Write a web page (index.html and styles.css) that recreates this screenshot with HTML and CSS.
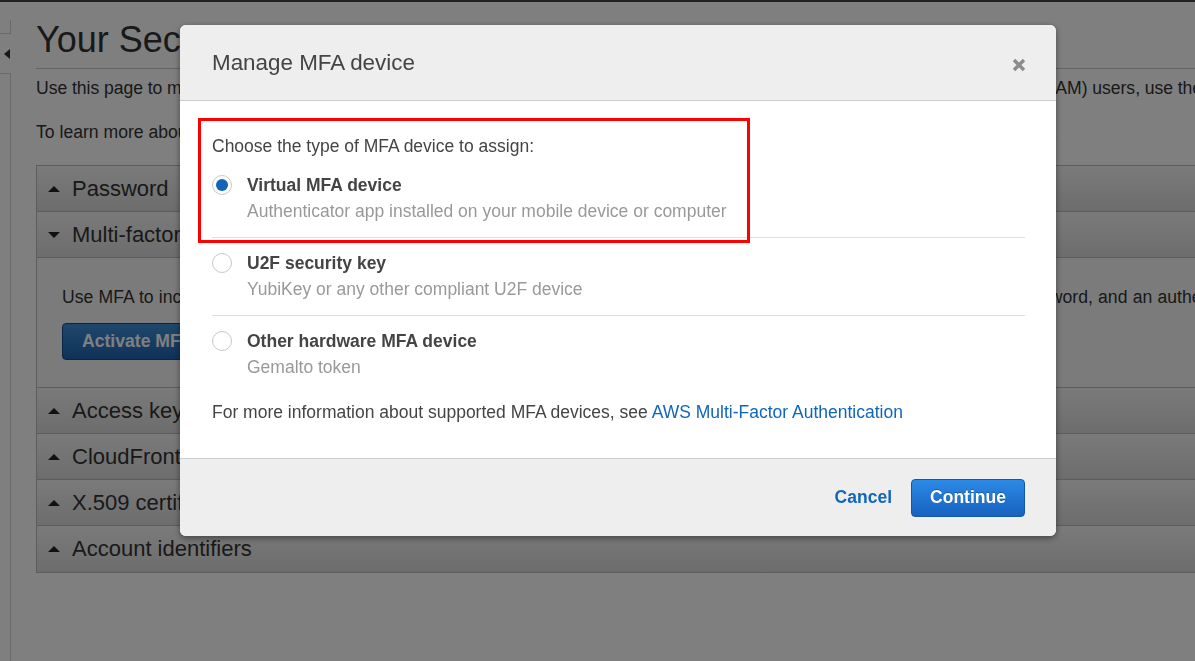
FILE: index.html
```html
<!DOCTYPE html>
<html lang="en">
<head>
<meta charset="utf-8">
<title>Your Security Credentials</title>
<link rel="stylesheet" href="styles.css">
</head>
<body>
<div class="topbar"></div>
<div class="page">
  <aside class="sidebar">
    <div class="side-top"></div>
    <div class="side-tab"><span class="tab-arrow"></span></div>
    <div class="side-rest"></div>
  </aside>
  <main class="main">
    <h1 class="title">Your Security Credentials</h1>
    <p class="intro first">Use this page to manage the credentials for your AWS account. To manage credentials for AWS Identity and Access Management (IAM) users, use the IAM Console.</p>
    <p class="intro second">To learn more about the types of AWS credentials and how they're used, see AWS Security Credentials in AWS General Reference.</p>
    <div class="panel">
      <div class="row"><span class="tri up"></span>Password</div>
      <div class="row"><span class="tri down"></span>Multi-factor authentication (MFA)</div>
      <div class="row-body">
        <p>Use MFA to increase the security of your AWS environment. Signing in to MFA-protected accounts requires a user name, password, and an authentication code from an MFA device.</p>
        <button class="btn-dark">Activate MFA</button>
      </div>
      <div class="row"><span class="tri up"></span>Access keys (access key ID and secret access key)</div>
      <div class="row"><span class="tri up"></span>CloudFront key pairs</div>
      <div class="row"><span class="tri up"></span>X.509 certificate</div>
      <div class="row last"><span class="tri up"></span>Account identifiers</div>
    </div>
  </main>
</div>

<div class="overlay"></div>

<div class="modal">
  <div class="modal-header">
    <h2 class="modal-title">Manage MFA device</h2>
    <span class="close" aria-label="Close">
      <svg width="14" height="14" viewBox="0 0 14 14"><path d="M2 2 L12 12 M12 2 L2 12" stroke="#8c8c8c" stroke-width="3.4" stroke-linecap="butt"/></svg>
    </span>
  </div>
  <div class="modal-body">
    <p class="lead">Choose the type of MFA device to assign:</p>
    <div class="option">
      <span class="radio checked"><span class="dot"></span></span>
      <div class="opt-text">
        <div class="opt-label">Virtual MFA device</div>
        <div class="opt-desc">Authenticator app installed on your mobile device or computer</div>
      </div>
    </div>
    <div class="option">
      <span class="radio"></span>
      <div class="opt-text">
        <div class="opt-label">U2F security key</div>
        <div class="opt-desc">YubiKey or any other compliant U2F device</div>
      </div>
    </div>
    <div class="option last">
      <span class="radio"></span>
      <div class="opt-text">
        <div class="opt-label">Other hardware MFA device</div>
        <div class="opt-desc">Gemalto token</div>
      </div>
    </div>
    <p class="note">For more information about supported MFA devices, see <a class="link" href="#">AWS Multi-Factor Authentication</a></p>
  </div>
  <div class="modal-footer">
    <a class="cancel" href="#">Cancel</a>
    <button class="btn-primary">Continue</button>
  </div>
  <div class="highlight"></div>
</div>
</body>
</html>
```

FILE: styles.css
```css
* { box-sizing: border-box; }

html, body {
  margin: 0;
  padding: 0;
  height: 100%;
}

body {
  font-family: "Liberation Sans", Arial, sans-serif;
  color: #333;
  background: #fff;
  overflow: hidden;
  position: relative;
}

.topbar {
  height: 2px;
  background: #444;
}

.page {
  display: flex;
  height: calc(100% - 2px);
}

.sidebar {
  width: 11px;
  flex: none;
  display: flex;
  flex-direction: column;
  padding-top: 18px;
}

.side-top {
  height: 14px;
  border-right: 1px solid #d4d4d4;
  border-bottom: 1px solid #d4d4d4;
}

.side-tab {
  height: 39px;
  display: flex;
  align-items: center;
  padding-left: 4px;
}

.tab-arrow {
  width: 0;
  height: 0;
  border-top: 5px solid transparent;
  border-bottom: 5px solid transparent;
  border-right: 6px solid #333;
}

.side-rest {
  flex: 1;
  border-top: 1px solid #d4d4d4;
  border-right: 1px solid #d4d4d4;
}

.main {
  margin-left: 25px;
  width: 1600px;
  flex: none;
}

.title {
  margin: 0;
  padding-top: 16px;
  padding-bottom: 6px;
  font-size: 36px;
  line-height: 44px;
  font-weight: normal;
  color: #333;
  border-bottom: 1px solid #c8c8c8;
}

.intro {
  margin: 0;
  font-size: 17.6px;
  line-height: 24px;
  color: #333;
  white-space: nowrap;
}

.intro.first { margin-top: 7px; word-spacing: -0.25px; }
.intro.second { margin-top: 20px; }

.panel {
  margin-top: 21px;
  border: 1px solid #bbb;
  border-right: none;
}

.row {
  height: 46px;
  display: flex;
  align-items: center;
  padding-left: 11px;
  font-size: 22px;
  color: #333;
  background: linear-gradient(#f5f5f5, #dadada);
  border-bottom: 1px solid #b9b9b9;
}

.row.last { border-bottom: none; }

.tri {
  width: 0;
  height: 0;
  margin-right: 12px;
  border-left: 6px solid transparent;
  border-right: 6px solid transparent;
}

.tri.up { border-bottom: 6px solid #222; }
.tri.down { border-top: 6px solid #222; }

.row-body {
  padding: 27px 0 27px 25px;
  background: #f7f7f7;
  border-bottom: 1px solid #b9b9b9;
}

.row-body p {
  margin: 0;
  font-size: 17.6px;
  line-height: 24px;
  white-space: nowrap;
  word-spacing: 0.35px;
}

.btn-dark {
  margin-top: 14px;
  height: 37px;
  padding: 0 19px;
  font-family: inherit;
  font-size: 17.6px;
  font-weight: bold;
  color: #fff;
  border: 1px solid #0e4a8a;
  border-radius: 4px;
  background: linear-gradient(#3f8fd8, #1f63b0);
}

.overlay {
  position: fixed;
  inset: 0;
  background: rgba(0, 0, 0, 0.5);
}

.modal {
  position: fixed;
  left: 180px;
  top: 25px;
  width: 876px;
  background: #fff;
  border-radius: 6px;
  overflow: hidden;
  box-shadow: 0 2px 6px rgba(0, 0, 0, 0.45);
  color: #444;
}

.modal-header {
  height: 76px;
  padding: 0 30px 0 32px;
  display: flex;
  align-items: center;
  justify-content: space-between;
  background: #eee;
  border-bottom: 1px solid #ccc;
}

.modal-title {
  margin: 0;
  font-size: 22.4px;
  font-weight: normal;
  color: #444;
}

.close {
  display: flex;
  margin-top: 5px;
}

.modal-body {
  padding: 32px 31px 33px 32px;
}

.lead {
  margin: 0 0 1px;
  font-size: 17.5px;
  line-height: 26px;
  color: #444;
}

.option {
  display: flex;
  align-items: flex-start;
  padding: 12px 0 13px;
  border-bottom: 1px solid #ddd;
}

.option.last { border-bottom: none; }

.radio {
  width: 20px;
  height: 20px;
  flex: none;
  margin-top: 3px;
  margin-right: 15px;
  border: 1px solid #c8c8c8;
  border-radius: 50%;
  background: #fff;
  display: flex;
  align-items: center;
  justify-content: center;
}

.dot {
  width: 12px;
  height: 12px;
  border-radius: 50%;
  background: #1166bb;
}

.opt-label {
  font-size: 17.5px;
  line-height: 26px;
  font-weight: bold;
  color: #444;
}

.opt-desc {
  font-size: 17.5px;
  line-height: 26px;
  color: #999;
}

.note {
  margin: 6px 0 0;
  font-size: 17.5px;
  line-height: 26px;
  color: #444;
}

.link {
  color: #1166bb;
  text-decoration: none;
}

.modal-footer {
  height: 78px;
  padding-right: 31px;
  display: flex;
  align-items: center;
  justify-content: flex-end;
  gap: 19px;
  background: #eee;
  border-top: 1px solid #ccc;
}

.cancel {
  font-size: 17.5px;
  font-weight: bold;
  color: #1166bb;
  text-decoration: none;
}

.btn-primary {
  width: 114px;
  height: 38px;
  font-family: inherit;
  font-size: 17.5px;
  font-weight: bold;
  color: #fff;
  border: 1px solid #1458a3;
  border-radius: 4px;
  background: linear-gradient(#2c8ae6, #1762bf);
  text-shadow: 0 -1px 0 rgba(0, 0, 0, 0.25);
}

.highlight {
  position: absolute;
  left: 18px;
  top: 93px;
  width: 552px;
  height: 125px;
  border: 3px solid #f00;
  pointer-events: none;
}
```
